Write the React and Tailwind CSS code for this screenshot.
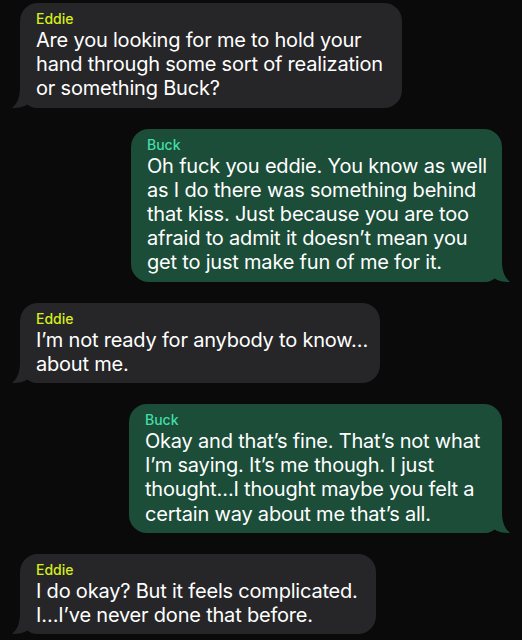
import React from 'react';

const MESSAGES = [
    {
        from: 'Eddie',
        width: 'w-[382px]',
        lines: ['Are you looking for me to hold your', 'hand through some sort of realization', 'or something Buck?'],
    },
    {
        from: 'Buck',
        width: 'w-[371px]',
        lines: [
            'Oh fuck you eddie. You know as well',
            'as I do there was something behind',
            'that kiss. Just because you are too',
            'afraid to admit it doesn\u2019t mean you',
            'get to just make fun of me for it.',
        ],
    },
    {
        from: 'Eddie',
        width: 'w-[360px]',
        lines: ['I\u2019m not ready for anybody to know\u2026', 'about me.'],
    },
    {
        from: 'Buck',
        width: 'w-[373px]',
        lines: [
            'Okay and that\u2019s fine. That\u2019s not what',
            'I\u2019m saying. It\u2019s me though. I just',
            'thought\u2026I thought maybe you felt a',
            'certain way about me that\u2019s all.',
        ],
    },
    {
        from: 'Eddie',
        width: 'w-[356px]',
        lines: ['I do okay? But it feels complicated.', 'I\u2026I\u2019ve never done that before.'],
    },
];

function Tail({ mine }) {
    // little hook at the bottom corner, same fill as the bubble
    return mine ? (
        <svg className="absolute -right-[8px] bottom-0 text-[#1b4d39]" width="26" height="20" viewBox="0 0 26 20">
            <path d="M18 0 C18 9 21 16 26 20 C19 20 14 19 10 16 C7 19 4 20 0 20 L0 0 Z" fill="currentColor" />
        </svg>
    ) : (
        <svg className="absolute -left-[8px] bottom-0 text-[#262628]" width="26" height="20" viewBox="0 0 26 20">
            <path d="M8 0 C8 9 5 16 0 20 C7 20 12 19 16 16 C19 19 22 20 26 20 L26 0 Z" fill="currentColor" />
        </svg>
    );
}

export default function App() {
    return (
        <div className="w-[522px] h-[640px] overflow-hidden bg-[#0a0a0a] pt-[3px] flex flex-col gap-[21px] font-['Inter','Liberation_Sans',sans-serif]">
            {MESSAGES.map((msg, i) => {
                const mine = msg.from === 'Buck';
                return (
                    <div key={i} className={`flex ${mine ? 'justify-end pr-[20px]' : 'justify-start pl-[20px]'}`}>
                        <div
                            className={`relative ${msg.width} rounded-[18px] pl-[16px] pr-[12px] pt-[6px] pb-[7px] ${mine ? 'bg-[#1b4d39]' : 'bg-[#262628]'}`}
                        >
                            <Tail mine={mine} />
                            <div className={`relative text-[14px] leading-[19px] font-medium ${mine ? 'text-[#42dea4]' : 'text-[#d6ee1c]'}`}>
                                {msg.from}
                            </div>
                            <div className="relative text-[20px] leading-[24.2px] text-white tracking-[-0.2px]">
                                {msg.lines.map((l, j) => (
                                    <div key={j} className="whitespace-nowrap">{l}</div>
                                ))}
                            </div>
                        </div>
                    </div>
                );
            })}
        </div>
    );
}
